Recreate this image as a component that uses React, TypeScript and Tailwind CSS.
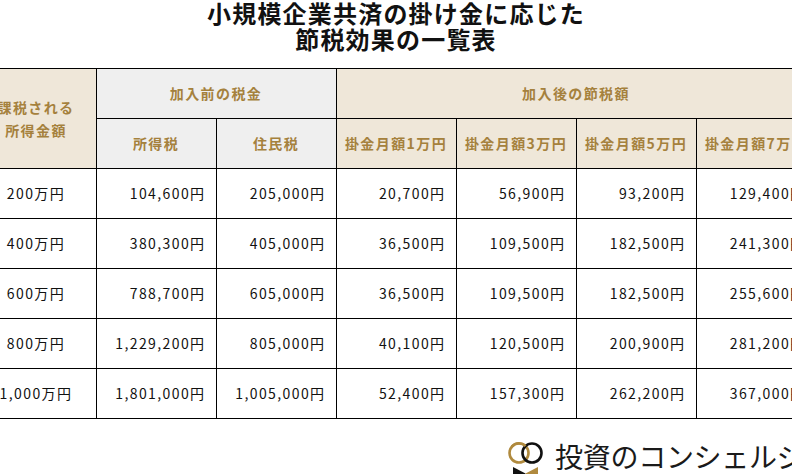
const FONT = { fontFamily: '"Noto Sans CJK JP", "Noto Sans", sans-serif' }

type Row = [string, string, string, string, string, string, string]

const rows: Row[] = [
  ['200万円', '104,600円', '205,000円', '20,700円', '56,900円', '93,200円', '129,400円'],
  ['400万円', '380,300円', '405,000円', '36,500円', '109,500円', '182,500円', '241,300円'],
  ['600万円', '788,700円', '605,000円', '36,500円', '109,500円', '182,500円', '255,600円'],
  ['800万円', '1,229,200円', '805,000円', '40,100円', '120,500円', '200,900円', '281,200円'],
  ['1,000万円', '1,801,000円', '1,005,000円', '52,400円', '157,300円', '262,200円', '367,000円'],
]

const head = 'border border-black font-bold text-[#a5813d] text-center align-middle'
const beige = 'bg-[#efe7d9]'
const gray = 'bg-[#efefef]'

function Logo() {
  return (
    <div className="flex items-start gap-[10px] pl-[507px] whitespace-nowrap">
      <svg width="38" height="36" viewBox="0 0 38 36" className="shrink-0">
        <circle cx="12" cy="12" r="9.5" fill="none" stroke="#b08a3e" strokeWidth="2.6" />
        <circle cx="25" cy="12" r="9.5" fill="none" stroke="#111" strokeWidth="2.6" />
        <path d="M4.8 5.6 A9.5 9.5 0 0 1 18.6 5" fill="none" stroke="#b08a3e" strokeWidth="2.6" />
        <path d="M6 26 L18.5 32.5 L18.5 36 L6 36 Z" fill="#111" />
        <path d="M18.5 32.5 L31 26 L31 36 L18.5 36 Z" fill="#b08a3e" />
      </svg>
      <span className="text-[28px] leading-none mt-[1px] tracking-[-0.01em] text-[#1a1a1a] font-normal">
        投資のコンシェルジュ
      </span>
    </div>
  )
}

export default function App() {
  return (
    <div className="w-[792px] h-[474px] overflow-hidden bg-white" style={FONT}>
      <h1 className="text-center text-[24px] leading-[26px] font-bold tracking-[0.05em] text-[#111]">
        小規模企業共済の掛け金に応じた
        <br />
        節税効果の一覧表
      </h1>

      <div className="flex justify-center mt-[16px]">
        <table className="border-collapse table-fixed w-[840px] shrink-0 text-[14px] tracking-[0.1em]">
          <colgroup>
            {Array.from({ length: 7 }).map((_, i) => (
              <col key={i} className="w-[120px]" />
            ))}
          </colgroup>
          <thead>
            <tr className="h-[50px]">
              <th rowSpan={2} className={`${head} ${beige} leading-[23px]`}>
                課税される
                <br />
                所得金額
              </th>
              <th colSpan={2} className={`${head} ${gray}`}>加入前の税金</th>
              <th colSpan={4} className={`${head} ${beige}`}>加入後の節税額</th>
            </tr>
            <tr className="h-[50px]">
              <th className={`${head} ${gray}`}>所得税</th>
              <th className={`${head} ${gray}`}>住民税</th>
              <th className={`${head} ${beige} whitespace-nowrap`}>掛金月額1万円</th>
              <th className={`${head} ${beige} whitespace-nowrap`}>掛金月額3万円</th>
              <th className={`${head} ${beige} whitespace-nowrap`}>掛金月額5万円</th>
              <th className={`${head} ${beige} whitespace-nowrap`}>掛金月額7万円</th>
            </tr>
          </thead>
          <tbody>
            {rows.map((r) => (
              <tr key={r[0]} className="h-[50px] text-[#111]">
                {r.map((c, i) => (
                  <td
                    key={i}
                    className={`border border-black align-middle whitespace-nowrap ${
                      i === 0 ? 'text-center' : 'text-right pr-[10px]'
                    }`}
                  >
                    {c}
                  </td>
                ))}
              </tr>
            ))}
          </tbody>
        </table>
      </div>

      <div className="mt-[22px]">
        <Logo />
      </div>
    </div>
  )
}
